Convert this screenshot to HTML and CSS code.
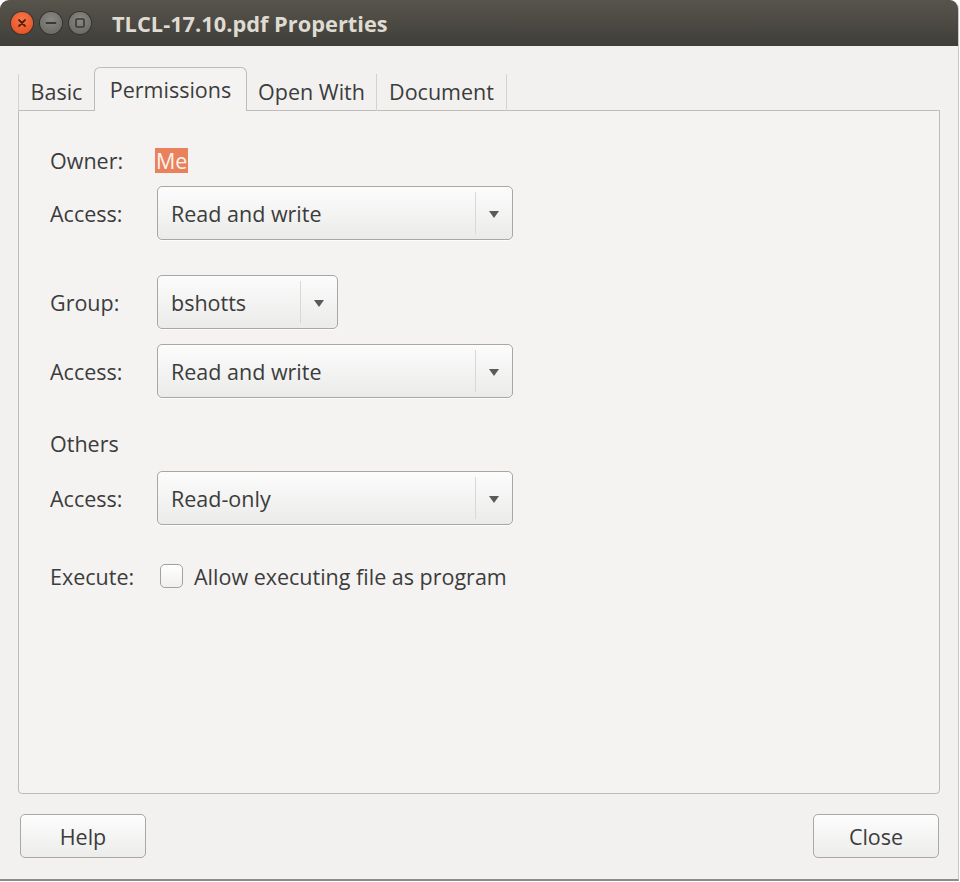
FILE: index.html
```html
<!DOCTYPE html>
<html>
<head>
<meta charset="utf-8">
<link rel="stylesheet" href="styles.css">
</head>
<body>
<div class="window">
  <div class="titlebar">
    <div class="controls">
      <span class="wbtn close"><svg viewBox="0 0 22 22" width="22" height="22"><path d="M8 8 L14 14 M14 8 L8 14" stroke="#5a1f0c" stroke-width="1.8" stroke-linecap="round"/></svg></span>
      <span class="wbtn"><svg viewBox="0 0 22 22" width="22" height="22"><path d="M6.5 11 H15.5" stroke="#3a3935" stroke-width="1.8" stroke-linecap="round"/></svg></span>
      <span class="wbtn"><svg viewBox="0 0 22 22" width="22" height="22"><rect x="7" y="7" width="8" height="8" rx="1" fill="none" stroke="#3a3935" stroke-width="1.6"/></svg></span>
    </div>
    <div class="title">TLCL-17.10.pdf Properties</div>
  </div>
  <div class="content">
    <div class="tabs">
      <div class="tab tab-first">Basic</div>
      <div class="tab active">Permissions</div>
      <div class="tab">Open With</div>
      <div class="tab">Document</div>
    </div>
    <div class="panel">
      <div class="row owner-row">
        <span class="label">Owner:</span>
        <span class="me">Me</span>
      </div>
      <div class="row combo-row">
        <span class="label">Access:</span>
        <div class="combo wide"><span class="combo-text">Read and write</span><span class="combo-btn"><span class="arrow"></span></span></div>
      </div>
      <div class="row combo-row group-row">
        <span class="label">Group:</span>
        <div class="combo narrow"><span class="combo-text">bshotts</span><span class="combo-btn"><span class="arrow"></span></span></div>
      </div>
      <div class="row combo-row access2">
        <span class="label">Access:</span>
        <div class="combo wide"><span class="combo-text">Read and write</span><span class="combo-btn"><span class="arrow"></span></span></div>
      </div>
      <div class="row others-row">
        <span class="label">Others</span>
      </div>
      <div class="row combo-row access3">
        <span class="label">Access:</span>
        <div class="combo wide"><span class="combo-text">Read-only</span><span class="combo-btn"><span class="arrow"></span></span></div>
      </div>
      <div class="row exec-row">
        <span class="label">Execute:</span>
        <label class="check"><span class="box"></span><span>Allow executing file as program</span></label>
      </div>
    </div>
    <div class="buttons">
      <div class="btn">Help</div>
      <div class="btn">Close</div>
    </div>
  </div>
</div>
</body>
</html>
```
FILE: styles.css
```css
* { box-sizing: border-box; }
html, body { margin: 0; padding: 0; }
body {
  width: 960px;
  height: 882px;
  background: #ffffff;
  font-family: "Open Sans", "DejaVu Sans", sans-serif;
  font-size: 21.5px;
  color: #3c3c3c;
  overflow: hidden;
}
.window {
  width: 959px;
  height: 881px;
  background: #f2f1f0;
  border-radius: 9px 9px 0 0;
  border-right: 1px solid #c9c8c5;
  border-bottom: 2px solid #8c8b88;
  display: flex;
  flex-direction: column;
  overflow: hidden;
}
.titlebar {
  height: 46px;
  background: linear-gradient(#57544c, #3f3e39);
  display: flex;
  align-items: center;
  padding-left: 11px;
  flex: none;
}
.controls { display: flex; gap: 7px; }
.wbtn {
  width: 22px;
  height: 22px;
  border-radius: 50%;
  background: radial-gradient(circle at 50% 35%, #8a8984, #63625d);
  box-shadow: 0 0 0 1px #34332f;
  display: flex;
}
.wbtn.close { background: radial-gradient(circle at 50% 35%, #f7784a, #e2491d); }
.title {
  margin-left: 21px;
  font-weight: bold;
  font-size: 21.8px;
  color: #dfdbd2;
}
.content {
  flex: 1;
  display: flex;
  flex-direction: column;
  padding: 21px 18px 0 18px;
}
.tabs {
  display: flex;
  align-items: flex-end;
  height: 44px;
  position: relative;
  z-index: 1;
  margin-bottom: -1px;
}
.tab {
  height: 37px;
  padding: 0 0 2px 0;
  display: flex;
  align-items: center;
  justify-content: center;
  border-right: 1px solid #d3d2cf;
  color: #3c3c3c;
  white-space: nowrap;
}
.tab-first { border-left: 1px solid #d3d2cf; width: 77px; }
.tab:nth-child(3), .tab:nth-child(4) { width: 130px; }
.tab.active {
  width: 153px;
  height: 44px;
  background: #f4f3f2;
  border: 1px solid #bdbcb8;
  border-bottom: none;
  border-radius: 6px 6px 0 0;
  padding-bottom: 1px;
}
.tab-first + .active { margin-left: -1px; }
.panel {
  height: 684px;
  border: 1px solid #bdbcb8;
  border-radius: 0 0 4px 4px;
  background: #f4f3f2;
  padding: 36px 0 0 31px;
  display: flex;
  flex-direction: column;
}
.row { display: flex; align-items: center; }
.label { width: 107px; flex: none; }
.owner-row { height: 26px; }
.me {
  background: #e9815c;
  color: #fdf3ee;
  padding: 0 1px;
  height: 25px;
  line-height: 25px;
  margin-left: -2px;
}
.combo-row { margin-top: 13px; }
.group-row { margin-top: 35px; }
.access2 { margin-top: 15px; }
.others-row { margin-top: 32px; height: 26px; }
.access3 { margin-top: 15px; }
.exec-row { margin-top: 38px; height: 26px; }
.combo {
  height: 54px;
  border: 1px solid #a9a7a3;
  border-radius: 5px;
  background: linear-gradient(#fcfcfc, #ebebea);
  box-shadow: 0 1px 0 rgba(255,255,255,0.8);
  display: flex;
  align-items: center;
}
.combo.wide { width: 356px; }
.combo.narrow { width: 181px; }
.combo-text { flex: 1; padding-left: 13px; white-space: nowrap; }
.combo-btn {
  width: 37px;
  height: 42px;
  border-left: 1px solid #d9d8d5;
  display: flex;
  align-items: center;
  justify-content: center;
}
.arrow {
  width: 0;
  height: 0;
  border-left: 5px solid transparent;
  border-right: 5px solid transparent;
  border-top: 7px solid #5b5a57;
  margin-top: 2px;
}
.check { display: flex; align-items: center; margin-left: 3px; white-space: nowrap; }
.box {
  width: 23px;
  height: 24px;
  border: 1px solid #a3a19d;
  border-radius: 5px;
  background: linear-gradient(#ffffff, #f0efee);
  margin-right: 11px;
}
.buttons {
  display: flex;
  justify-content: space-between;
  padding: 20px 1px 0 2px;
}
.btn {
  width: 126px;
  height: 44px;
  border: 1px solid #aaa8a4;
  border-radius: 5px;
  background: linear-gradient(#fdfdfd, #ececeb);
  display: flex;
  align-items: center;
  justify-content: center;
}
```
